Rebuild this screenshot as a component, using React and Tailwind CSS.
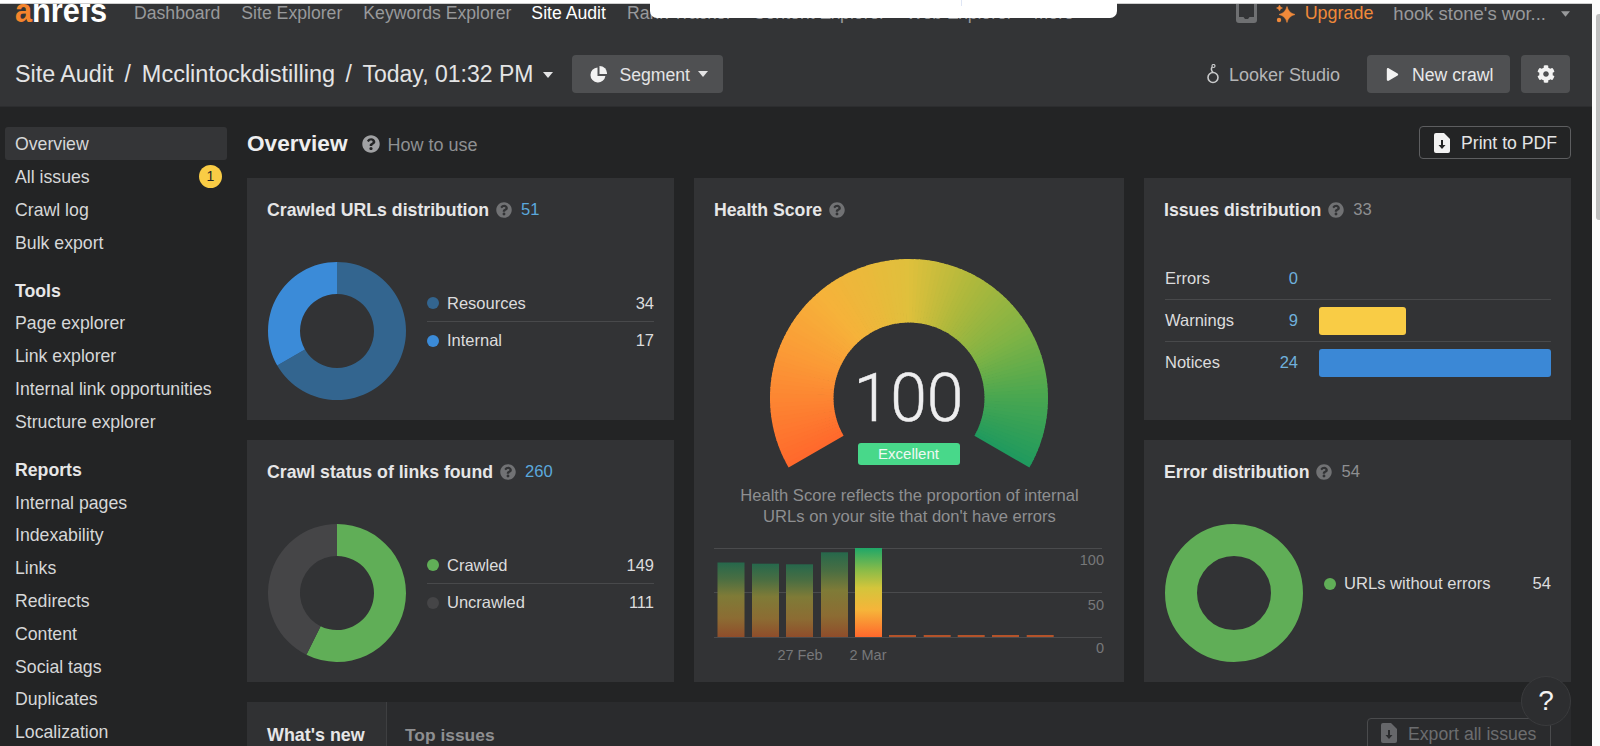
import React from "react";
import { FaCog, FaPlay, FaQuestionCircle } from "react-icons/fa";

function pt(cx, cy, r, deg) {
  const a = ((deg - 90) * Math.PI) / 180;
  return [cx + r * Math.cos(a), cy + r * Math.sin(a)];
}
function ring(cx, cy, R, r, a0, a1) {
  const [x0, y0] = pt(cx, cy, R, a0);
  const [x1, y1] = pt(cx, cy, R, a1);
  const [x2, y2] = pt(cx, cy, r, a1);
  const [x3, y3] = pt(cx, cy, r, a0);
  const large = a1 - a0 > 180 ? 1 : 0;
  return `M${x0} ${y0}A${R} ${R} 0 ${large} 1 ${x1} ${y1}L${x2} ${y2}A${r} ${r} 0 ${large} 0 ${x3} ${y3}Z`;
}

function Donut({ segments }) {
  let start = 0;
  const total = segments.reduce((s, x) => s + x.value, 0);
  return (
    <svg width="138" height="138" viewBox="0 0 138 138" className="shrink-0">
      {segments.length === 1 ? (
        <circle cx="69" cy="69" r="53" fill="none" stroke={segments[0].color} strokeWidth="32" />
      ) : (
        segments.map((s) => {
          const a0 = start;
          const a1 = start + (s.value / total) * 360;
          start = a1;
          return <path key={s.color} d={ring(69, 69, 69, 37, a0, a1)} fill={s.color} />;
        })
      )}
    </svg>
  );
}

const stops = [
  [0, [255, 104, 44]],
  [0.2, [251, 152, 54]],
  [0.33, [246, 178, 58]],
  [0.5, [223, 192, 60]],
  [0.62, [174, 184, 60]],
  [0.75, [127, 179, 69]],
  [0.87, [74, 167, 80]],
  [1, [31, 154, 94]],
];
function gaugeColor(t) {
  for (let i = 1; i < stops.length; i++) {
    if (t <= stops[i][0]) {
      const [t0, c0] = stops[i - 1];
      const [t1, c1] = stops[i];
      const k = (t - t0) / (t1 - t0);
      return `rgb(${c0.map((v, j) => Math.round(v + (c1[j] - v) * k)).join(",")})`;
    }
  }
  return "rgb(31,154,94)";
}

function Gauge() {
  const n = 120;
  const parts = [];
  for (let i = 0; i < n; i++) {
    const a0 = -120 + (240 * i) / n;
    const a1 = -120 + (240 * (i + 1)) / n + (i < n - 1 ? 0.5 : 0);
    parts.push(<path key={i} d={ring(140, 140, 139, 75.5, a0, a1)} fill={gaugeColor((i + 0.5) / n)} />);
  }
  return (
    <svg width="280" height="212" viewBox="0 0 280 212">
      {parts}
    </svg>
  );
}

function HelpIcon({ size = 16 }) {
  return <FaQuestionCircle size={size} className="shrink-0 text-[#717274]" />;
}

function Caret({ className, w = 10, h = 6 }) {
  return (
    <svg width={w} height={h} viewBox="0 0 10 6" className={className}>
      <path d="M0 0H10L5 6Z" fill="currentColor" />
    </svg>
  );
}

function DocIcon({ arrow = "#232425", fill = "#f2f2f2" }) {
  return (
    <svg width="16" height="20" viewBox="0 0 16 20" className="shrink-0">
      <path d="M2 0H10L16 6V18A2 2 0 0 1 14 20H2A2 2 0 0 1 0 18V2A2 2 0 0 1 2 0Z" fill={fill} />
      <path d="M7 7H9V12H11.5L8 16L4.5 12H7Z" fill={arrow} />
    </svg>
  );
}

function Card({ title, count, countClass = "text-[#5ba8dc]", className = "", children }) {
  return (
    <div className={`bg-[#323335] pl-[21px] pr-[20px] pt-[22px] ${className}`}>
      <div className="ml-[-1px] flex h-[20px] items-center">
        <span className="text-[17.7px] font-bold text-[#e6e6e7]">{title}</span>
        <span className="ml-[7px]">
          <HelpIcon />
        </span>
        {count && <span className={`ml-[9px] text-[16.6px] ${countClass}`}>{count}</span>}
      </div>
      {children}
    </div>
  );
}

function Legend({ rows }) {
  return (
    <div className="ml-[21px] mt-[23px] flex-1">
      {rows.map((r, i) => (
        <div
          key={r.label}
          className={`flex h-[37px] items-center text-[16.5px] text-[#dcdcdd] ${i < rows.length - 1 ? "border-b border-[#48494b]" : ""}`}
        >
          <span className="mr-[8px] h-[12px] w-[12px] rounded-full" style={{ background: r.color }} />
          <span className="flex-1">{r.label}</span>
          <span>{r.value}</span>
        </div>
      ))}
    </div>
  );
}

function SideItem({ label, active, badge }) {
  return (
    <div
      className={`flex h-[32.8px] w-[222px] items-center justify-between rounded-[3px] pl-[10px] pr-[5px] text-[17.7px] text-[#d6d7d8] ${active ? "bg-[#343537]" : ""}`}
    >
      <span className="pt-[2px]">{label}</span>
      {badge && (
        <span className="flex h-[23px] w-[23px] items-center justify-center rounded-full bg-[#f9cc45] text-[14px] text-[#232425]">
          {badge}
        </span>
      )}
    </div>
  );
}

function SideHead({ label }) {
  return (
    <div className="mt-[15.3px] flex h-[32.8px] items-center pl-[10px] pt-[2px] text-[17.7px] font-bold text-[#e6e6e7]">{label}</div>
  );
}

function Chart() {
  const bars = [
    [717.5, 562.5],
    [752, 563.7],
    [786, 564.3],
    [821, 552.3],
  ];
  const tiny = [889, 923.7, 957.7, 992, 1026.7];
  const f = (x) => x - 714;
  const y = (v) => v - 548;
  const labelCls = "[font-family:'Liberation_Sans',sans-serif]";
  return (
    <svg width="392" height="120" viewBox="0 0 392 120" className="block">
      <defs>
        <linearGradient id="dim" x1="0" y1="0" x2="0" y2="1">
          <stop offset="0" stopColor="#26684c" />
          <stop offset="0.22" stopColor="#4a6e42" />
          <stop offset="0.45" stopColor="#7f7b37" />
          <stop offset="0.75" stopColor="#8c6c33" />
          <stop offset="1" stopColor="#8f4d2b" />
        </linearGradient>
        <linearGradient id="bright" x1="0" y1="0" x2="0" y2="1">
          <stop offset="0" stopColor="#1fa768" />
          <stop offset="0.25" stopColor="#8abb48" />
          <stop offset="0.45" stopColor="#d4c53b" />
          <stop offset="0.7" stopColor="#f6b43a" />
          <stop offset="1" stopColor="#ff682c" />
        </linearGradient>
      </defs>
      {[548, 592, 637].map((v) => (
        <line key={v} x1="0" x2="388" y1={y(v) + 0.5} y2={y(v) + 0.5} stroke="#4a4b4d" />
      ))}
      {bars.map(([x, t]) => (
        <rect key={x} x={f(x)} y={y(t)} width="27" height={637 - t} fill="url(#dim)" />
      ))}
      <rect x={f(855)} y={0} width="27" height={89} fill="url(#bright)" />
      {tiny.map((x) => (
        <rect key={x} x={f(x)} y={y(635)} width="27" height="2" fill="#b4532a" />
      ))}
      <g fill="#77787a" fontSize="14.5" className={labelCls}>
        <text x={f(800)} y={y(660)} textAnchor="middle">27 Feb</text>
        <text x={f(868)} y={y(660)} textAnchor="middle">2 Mar</text>
        <text x="390" y={y(565)} textAnchor="end">100</text>
        <text x="390" y={y(609.5)} textAnchor="end">50</text>
        <text x="390" y={y(653)} textAnchor="end">0</text>
      </g>
    </svg>
  );
}

export default function App() {
  return (
    <div className="relative flex h-[746px] w-[1600px] overflow-hidden bg-white [font-family:'Liberation_Sans',Arial,sans-serif]">
      <div className="w-[1592px] shrink-0">
        <div className="relative z-10 h-[4px] border-b border-[#cfcfcf] bg-white" />
        <header className="h-[103px] border-b border-[#2c2d2f] bg-[#333436]">
          <nav className="flex h-[19px] items-center text-[17.65px] text-[#98999b]">
            <span className="ml-[15px] mt-[-3px] w-[119px] origin-left translate-y-[-2px] scale-x-[0.93] whitespace-nowrap text-[33px] font-bold leading-[19px]">
              <span className="text-[#f5842c]">a</span>
              <span className="text-white">hrefs</span>
            </span>
            <span className="mr-[21px]">Dashboard</span>
            <span className="mr-[21px]">Site Explorer</span>
            <span className="mr-[20px]">Keywords Explorer</span>
            <span className="mr-[21px] text-white">Site Audit</span>
            <span className="mr-[21px]">Rank Tracker</span>
            <span className="mr-[21px]">Content Explorer</span>
            <span className="mr-[21px]">Web Explorer</span>
            <span>More</span>
            <svg width="21" height="19" viewBox="0 0 21 19" className="ml-auto shrink-0 text-[#6f7072]">
              <path d="M0 0H3V13H7.5L9 15H12L13.5 13H18V0H21V16A3 3 0 0 1 18 19H3A3 3 0 0 1 0 16Z" fill="currentColor" />
            </svg>
            <svg width="19" height="18" viewBox="0 0 19 18" className="ml-[19px] shrink-0 text-[#f0893a]">
              <path d="M11 1.5Q12.5 8 19 9.5Q12.5 11 11 17.5Q9.5 11 3 9.5Q9.5 8 11 1.5Z" fill="currentColor" stroke="currentColor" strokeWidth="0.6" />
              <path d="M3.5 0Q4 2.5 6.5 3Q4 3.5 3.5 6Q3 3.5 0.5 3Q3 2.5 3.5 0Z" fill="currentColor" stroke="currentColor" strokeWidth="0.5" />
              <circle cx="3" cy="15" r="2.2" fill="currentColor" />
            </svg>
            <span className="ml-[10px] text-[17.9px] text-[#f0893a]">Upgrade</span>
            <span className="ml-[20px] text-[18.5px]">hook stone's wor...</span>
            <Caret w={9} h={6} className="ml-[15px] mr-[22px] text-[#98999b]" />
          </nav>
          <div className="mt-[32px] flex h-[38px] items-center pl-[15px] pr-[22px]">
            <span className="flex items-baseline whitespace-nowrap pt-[2px] text-[23px] text-[#e4e4e5]">
              <span className="text-[23.3px]">Site Audit</span>
              <span className="mx-[11px]">/</span>
              <span className="text-[23.5px]">Mcclintockdistilling</span>
              <span className="mx-[10.5px]">/</span>
              <span>Today, 01:32 PM</span>
            </span>
            <Caret className="ml-[10px] mt-[1px] text-[#e4e4e5]" />
            <div className="ml-[19px] flex h-[38px] w-[151px] shrink-0 items-center rounded-[4px] bg-[#4f5052] pl-[18px] text-[17.65px] text-[#e4e4e5]">
              <svg width="17" height="17" viewBox="0 0 17 17" className="shrink-0">
                <path d="M7.5 1.5A7.5 7.5 0 1 0 15.4 10H7.5Z" fill="#f2f2f2" />
                <path d="M9.5 0A7.5 7.5 0 0 1 17 8H9.5Z" fill="#f2f2f2" />
              </svg>
              <span className="ml-[12px] pt-[2px]">Segment</span>
              <Caret className="ml-[8px] text-[#e4e4e5]" />
            </div>
            <svg width="14" height="20" viewBox="0 0 14 20" className="ml-auto shrink-0 text-[#c9cacb]">
              <circle cx="7" cy="13.5" r="5" fill="none" stroke="currentColor" strokeWidth="1.6" />
              <path d="M7 8.5C5.2 6.5 5 4.5 6.2 3" fill="none" stroke="currentColor" strokeWidth="1.5" />
              <circle cx="7.5" cy="2" r="1.5" fill="none" stroke="currentColor" strokeWidth="1.2" />
            </svg>
            <span className="ml-[9px] pt-[2px] text-[18px] text-[#b4b5b6]">Looker Studio</span>
            <div className="ml-[27px] flex h-[38px] w-[143px] shrink-0 items-center rounded-[4px] bg-[#4f5052] pl-[19px] text-[17.65px] text-[#e8e8e9]">
              <FaPlay size={13} className="text-[#f2f2f2]" />
              <span className="ml-[13px] pt-[2px]">New crawl</span>
            </div>
            <div className="ml-[11px] flex h-[38px] w-[49px] shrink-0 items-center justify-center rounded-[4px] bg-[#4f5052]">
              <FaCog size={18} className="text-[#f2f2f2]" />
            </div>
          </div>
        </header>
        <div className="flex h-[639px] bg-[#232425]">
          <aside className="w-[247px] shrink-0 pl-[5px] pt-[20px]">
            <SideItem label="Overview" active />
            <SideItem label="All issues" badge="1" />
            <SideItem label="Crawl log" />
            <SideItem label="Bulk export" />
            <SideHead label="Tools" />
            <SideItem label="Page explorer" />
            <SideItem label="Link explorer" />
            <SideItem label="Internal link opportunities" />
            <SideItem label="Structure explorer" />
            <SideHead label="Reports" />
            <SideItem label="Internal pages" />
            <SideItem label="Indexability" />
            <SideItem label="Links" />
            <SideItem label="Redirects" />
            <SideItem label="Content" />
            <SideItem label="Social tags" />
            <SideItem label="Duplicates" />
            <SideItem label="Localization" />
          </aside>
          <main className="w-[1324px] shrink-0">
            <div className="flex h-[71px] items-start pt-[19px]">
              <span className="mt-[3px] text-[22.6px] font-bold leading-[30px] text-[#eeeeef]">Overview</span>
              <span className="ml-[15px] mt-[9px]">
                <FaQuestionCircle size={18} className="text-[#a0a1a3]" />
              </span>
              <span className="ml-[7px] mt-[8px] text-[18px] leading-[22px] text-[#8f9092]">How to use</span>
              <div className="ml-auto flex h-[33px] w-[152px] items-center rounded-[4px] border border-[#5d5e60] pl-[14px] text-[17.65px] text-[#e4e4e5]">
                <DocIcon />
                <span className="ml-[11px] pt-[2px]">Print to PDF</span>
              </div>
            </div>
            <div className="grid grid-cols-[427px_430px_427px] grid-rows-[242px_242px] gap-x-[20px] gap-y-[20px]">
              <Card title="Crawled URLs distribution" count="51">
                <div className="mt-[42px] flex">
                  <Donut segments={[{ value: 34, color: "#33658f" }, { value: 17, color: "#3b8bd8" }]} />
                  <Legend rows={[{ label: "Resources", value: "34", color: "#33658f" }, { label: "Internal", value: "17", color: "#3b8bd8" }]} />
                </div>
              </Card>
              <Card title="Health Score" className="row-span-2">
                <div className="relative ml-[53.5px] mt-[38px] h-[212px] w-[280px]">
                  <Gauge />
                  <div className="absolute inset-x-0 top-[98px] text-center font-['Roboto',sans-serif] text-[66px] font-light leading-[86px] text-[#eeeeef] [-webkit-text-stroke:0.5px_#eeeeef]">100</div>
                  <div className="absolute left-[89px] top-[185px] flex h-[22px] w-[102px] items-center justify-center rounded-[3px] bg-[#48d88a] text-[15px] text-[#eef9f2]">Excellent</div>
                </div>
                <p className="mt-[15px] whitespace-nowrap text-center text-[16.6px] leading-[21px] text-[#8e8f91]">
                  Health Score reflects the proportion of internal
                  <br />
                  URLs on your site that don't have errors
                </p>
                <div className="ml-[-1px] mt-[21px]">
                  <Chart />
                </div>
              </Card>
              <Card title="Issues distribution" count="33" countClass="text-[#8e8f91]">
                <div className="mt-[38px] text-[16.5px] text-[#dcdcdd]">
                  {[
                    { l: "Errors", v: "0", h: "h-[42px]" },
                    { l: "Warnings", v: "9", bar: "w-[87px] bg-[#f9cc45]", h: "h-[42px]" },
                    { l: "Notices", v: "24", bar: "w-full bg-[#3b88d6]", h: "h-[41px]" },
                  ].map((r, i) => (
                    <div key={r.l} className={`flex items-center ${r.h} ${i < 2 ? "border-b border-[#48494b]" : ""}`}>
                      <span className="flex-1">{r.l}</span>
                      <span className="text-[#6fb0dc]">{r.v}</span>
                      <div className="ml-[21px] w-[232px]">
                        {r.bar && <div className={`h-[28px] rounded-[3px] ${r.bar}`} />}
                      </div>
                    </div>
                  ))}
                </div>
              </Card>
              <Card title="Crawl status of links found" count="260">
                <div className="mt-[42px] flex">
                  <Donut segments={[{ value: 149, color: "#60ae57" }, { value: 111, color: "#454547" }]} />
                  <Legend rows={[{ label: "Crawled", value: "149", color: "#60ae57" }, { label: "Uncrawled", value: "111", color: "#454547" }]} />
                </div>
              </Card>
              <Card title="Error distribution" count="54" countClass="text-[#8e8f91]">
                <div className="mt-[42px] flex">
                  <Donut segments={[{ value: 54, color: "#60ae57" }]} />
                  <div className="ml-[21px] mt-[42px] flex h-[36px] flex-1 items-center text-[16.6px] text-[#dcdcdd]">
                    <span className="mr-[8px] h-[12px] w-[12px] rounded-full bg-[#60ae57]" />
                    <span className="flex-1">URLs without errors</span>
                    <span>54</span>
                  </div>
                </div>
              </Card>
            </div>
            <div className="mt-[20px] flex h-[60px] bg-[#2a2b2d]">
              <div className="h-full w-[140px] border-r border-[#3e3f41] bg-[#303133] pl-[20px] pt-[22px] text-[17.9px] font-bold leading-[22px] text-[#e6e6e7]">What's new</div>
              <div className="ml-[18px] pt-[22px] text-[17.4px] font-bold leading-[22px] text-[#8e8f91]">Top issues</div>
              <div className="ml-auto mr-[20px] mt-[16px] flex h-[44px] w-[184px] items-start rounded-[4px] border border-[#4a4b4d] pl-[13px] pt-[4px] text-[17.65px] leading-[22px] text-[#6c6d6f]">
                <DocIcon fill="#66676a" arrow="#2a2b2d" />
                <span className="ml-[11px]">Export all issues</span>
              </div>
            </div>
          </main>
        </div>
      </div>
      <div className="flex-1 bg-[#fbfbfb] pt-[14px]">
        <div className="ml-[4px] h-[206px] w-[4px] rounded-l-[3px] bg-[#bfbfbf]" />
      </div>
      <div className="absolute left-[650px] top-0 z-20 h-[18px] w-[467px] rounded-b-[7px] bg-white">
        <div className="ml-[311px] h-[6px] w-px bg-[#dfe6f5]" />
      </div>
      <div className="absolute left-[1521px] top-[676px] z-20 flex h-[50px] w-[50px] items-center justify-center rounded-full border border-[#3a3b3d] bg-[#2d2e30] text-[28px] text-[#f2f2f2]">?</div>
    </div>
  );
}
